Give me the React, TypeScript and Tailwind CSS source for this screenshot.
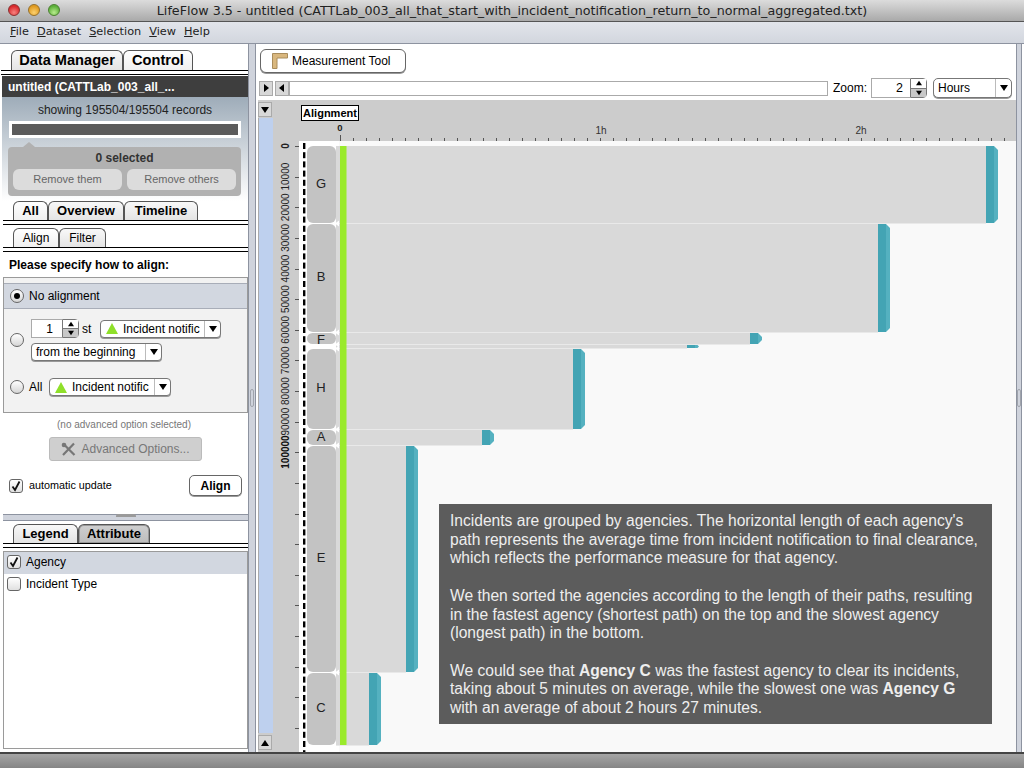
import React from "react";

const SANS = "font-['Liberation_Sans',Arial,sans-serif]";

function Tab({ label, active, pressed, className }: { label: string; active?: boolean; pressed?: boolean; className: string }) {
  return (
    <div
      className={`flex items-center justify-center rounded-t-[6px] border border-b-0 border-[#555] ${
        pressed ? "bg-[linear-gradient(#cfcfcf,#bdbdbd)] shadow-[inset_0_0_0_1px_#999]" : active ? "bg-[linear-gradient(#ffffff,#f0f0f0)]" : "bg-[linear-gradient(#f8f8f8,#e4e4e4)]"
      } font-bold text-black ${className}`}
    >
      {label}
    </div>
  );
}

function DoubleLine({ gap }: { gap: string }) {
  return <div className={`border-t border-b border-black bg-white ${gap}`} />;
}

function Radio({ on }: { on?: boolean }) {
  return (
    <div className="flex h-[14px] w-[14px] shrink-0 items-center justify-center rounded-full border border-[#666] bg-[linear-gradient(#ffffff,#d5d5d5)]">
      {on && <div className="h-[6px] w-[6px] rounded-full bg-black" />}
    </div>
  );
}

function Check({ on }: { on?: boolean }) {
  return (
    <div className="flex h-[14px] w-[14px] shrink-0 items-center justify-center rounded-[3px] border border-[#666] bg-[linear-gradient(#ffffff,#e0e0e0)]">
      {on && (
        <svg width="12" height="12" viewBox="0 0 12 12">
          <path d="M2.5 6.5 L5 10 L9.5 1.5" fill="none" stroke="#111" strokeWidth="1.8" />
        </svg>
      )}
    </div>
  );
}

function Triangle() {
  return (
    <svg width="12" height="11" viewBox="0 0 12 11" className="shrink-0">
      <polygon points="6,0 12,11 0,11" fill="#8fe02a" />
    </svg>
  );
}

function Arrow({ dir = "down", size = 8 }: { dir?: "down" | "up" | "left" | "right"; size?: number }) {
  const p = { down: "0,1 8,1 4,7", up: "0,7 8,7 4,1", left: "6,0 6,8 1,4", right: "2,0 2,8 7,4" }[dir];
  return (
    <svg width={size} height={size} viewBox="0 0 8 8" className="shrink-0">
      <polygon points={p} fill="#000" />
    </svg>
  );
}

function EventSelect({ className }: { className: string }) {
  return (
    <div className={`flex h-[18px] items-center rounded-[4px] border border-[#777] bg-white shadow-[0_1px_0_#999] ${className}`}>
      <div className="flex min-w-0 flex-1 items-center gap-[5px] whitespace-nowrap pl-[5px]">
        <Triangle />
        <span className="text-[12px]">Incident notific</span>
      </div>
      <div className="flex h-full w-[16px] items-center justify-center border-l border-[#bbb]">
        <Arrow />
      </div>
    </div>
  );
}

function SpinButtons({ width }: { width: string }) {
  return (
    <div className={`flex ${width} flex-col self-stretch rounded-r-[4px] border border-[#777]`}>
      <div className="flex flex-1 items-center justify-center bg-white">
        <Arrow dir="up" size={6} />
      </div>
      <div className="flex flex-1 items-center justify-center border-t border-[#777] bg-[#c8c8c8]">
        <Arrow size={6} />
      </div>
    </div>
  );
}

function LeftPanel() {
  return (
    <div className="flex w-[248px] shrink-0 flex-col bg-white">
      <div className="mt-[6px] flex h-[20px] pl-[11px] text-[14.6px]">
        <Tab label="Data Manager" className="w-[112px]" />
        <Tab label="Control" active className="w-[70px]" />
      </div>
      <DoubleLine gap="ml-[1px] h-[5px]" />
      <div className="ml-[2px] mt-[1px] flex h-[21px] items-center bg-[#3e3e3e] pl-[6px] text-[12px] font-bold text-white">
        untitled (CATTLab_003_all_...
      </div>
      <div className="ml-[2px] h-[104px] bg-[linear-gradient(#9eacb9,#ffffff)] px-[6px]">
        <div className="pt-[6px] text-center text-[12px] leading-[14px] text-[#222]">showing 195504/195504 records</div>
        <div className="ml-[1px] mt-[4px] h-[17px] w-[232px] border-[3px] border-white bg-[#5b5b5b]" />
        <div className="relative mt-[9px] h-[49px] w-[233px] rounded-[4px] bg-[#b1b1b1]">
          <div className="absolute -top-[5px] left-[15px] h-0 w-0 border-x-[6px] border-b-[5px] border-x-transparent border-b-[#b1b1b1]" />
          <div className="pt-[4px] text-center text-[12px] font-bold leading-[14px] text-[#333]">0 selected</div>
          <div className="mt-[4px] flex justify-between px-[5px] text-[11px] text-[#666]">
            <div className="flex h-[21px] w-[109px] items-center justify-center rounded-[6px] bg-[#dcdcdc]">Remove them</div>
            <div className="flex h-[21px] w-[109px] items-center justify-center rounded-[6px] bg-[#dcdcdc]">Remove others</div>
          </div>
        </div>
      </div>
      <div className="flex h-[19px] pl-[13px] text-[13px]">
        <Tab label="All" active className="w-[35px]" />
        <Tab label="Overview" className="w-[76px]" />
        <Tab label="Timeline" className="w-[74px]" />
      </div>
      <DoubleLine gap="ml-[3px] h-[5px]" />
      <div className="mt-[3px] flex h-[19px] pl-[13px] text-[12px]">
        <Tab label="Align" active className="w-[46px] !font-normal" />
        <Tab label="Filter" className="w-[47px] !font-normal" />
      </div>
      <DoubleLine gap="ml-[3px] h-[5px]" />
      <div className="mt-[6px] pl-[9px] text-[12px] font-bold leading-[14px]">Please specify how to align:</div>
      <div className="ml-[3px] mt-[5px] h-[136px] w-[245px] border border-[#9a9a9a] bg-[#f2f2f2] pt-[5px]">
        <div className="flex h-[26px] items-center gap-[5px] border-y border-[#a8adb8] bg-[#d2d7e0] pl-[6px] text-[12px]">
          <Radio on />
          No alignment
        </div>
        <div className="mt-[10px] flex items-center pl-[6px]">
          <Radio />
          <div className="ml-[7px] flex flex-col gap-[5px]">
            <div className="flex items-center text-[12px]">
              <div className="flex h-[19px] w-[48px]">
                <div className="flex w-[31px] items-center justify-end border border-r-0 border-[#aaa] bg-white pr-[9px]">1</div>
                <SpinButtons width="w-[17px]" />
              </div>
              <span className="ml-[3px] w-[18px]">st</span>
              <EventSelect className="w-[121px]" />
            </div>
            <div className="flex h-[18px] w-[131px] items-center rounded-[4px] border border-[#777] bg-white pl-[4px] text-[12px] shadow-[0_1px_0_#999]">
              <span className="flex-1">from the beginning</span>
              <div className="flex h-full w-[16px] items-center justify-center border-l border-[#bbb]">
                <Arrow />
              </div>
            </div>
          </div>
        </div>
        <div className="mt-[17px] flex items-center pl-[6px] text-[12px]">
          <Radio />
          <span className="ml-[5px] w-[20px]">All</span>
          <EventSelect className="w-[122px]" />
        </div>
      </div>
      <div className="mt-[5px] text-center text-[10px] leading-[14px] text-[#777]">(no advanced option selected)</div>
      <div className="ml-[49px] mt-[5px] flex h-[24px] w-[153px] items-center justify-center gap-[5px] rounded-[3px] border border-[#bbb] bg-[#cfcfcf] text-[12px] text-[#777]">
        <svg width="15" height="15" viewBox="0 0 15 15">
          <path d="M2 1.5 L13.5 13 M13 1.5 L2 13" stroke="#777" strokeWidth="2.2" fill="none" />
          <circle cx="3" cy="3" r="2.3" fill="#777" />
        </svg>
        Advanced Options...
      </div>
      <div className="mt-[14px] flex h-[21px] items-center pl-[9px] pr-[6px]">
        <Check on />
        <span className="ml-[6px] flex-1 text-[10.8px]">automatic update</span>
        <div className="flex h-[21px] w-[53px] items-center justify-center rounded-[5px] border border-[#666] bg-white text-[12px] font-bold shadow-[0_1px_0_#999]">Align</div>
      </div>
      <div className="relative ml-[3px] mt-[18px] h-[7px] border-y border-[#8d93a0] bg-[#cfd3dc]">
        <div className="absolute -top-px left-[113px] h-[3px] w-[20px] rounded-t-[2px] bg-[#9a9a9a]" />
      </div>
      <div className="mt-[3px] flex h-[19px] pl-[13px] text-[13px]">
        <Tab label="Legend" className="w-[65px]" />
        <Tab label="Attribute" pressed className="w-[72px]" />
      </div>
      <DoubleLine gap="ml-[3px] h-[5px]" />
      <div className="ml-[3px] mt-[3px] h-[198px] w-[245px] border border-[#9a9a9a] bg-white text-[12px] leading-[14px]">
        <div className="flex h-[22px] items-start gap-[5px] bg-[#d2d7e0] pl-[3px] pt-[3px]">
          <Check on />
          Agency
        </div>
        <div className="flex h-[22px] items-start gap-[5px] pl-[3px] pt-[3px]">
          <Check />
          Incident Type
        </div>
      </div>
    </div>
  );
}

const GROUPS = [
  { label: "G", y0: 146, y1: 223, end: 998 },
  { label: "B", y0: 224, y1: 332, end: 890 },
  { label: "F", y0: 333, y1: 344, end: 762 },
  { label: "", y0: 345, y1: 348, end: 699 },
  { label: "H", y0: 349, y1: 429, end: 585 },
  { label: "A", y0: 430, y1: 445, end: 494 },
  { label: "E", y0: 446, y1: 672, end: 418 },
  { label: "C", y0: 673, y1: 745, end: 381 },
];

function Chart() {
  const minor: number[] = [];
  for (let x = 353; x <= 1004; x += 13.02) minor.push(x);
  const yTicks: number[] = [];
  for (let i = 0; i < 20; i++) yTicks.push(146 + i * 30.63);
  const dashes: number[] = [];
  for (let y = 143; y < 752; y += 9.2) dashes.push(y);
  return (
    <svg viewBox="273 100 743 652" className="h-[652px] w-[743px]" style={{ fontFamily: "'Liberation Sans', Arial, sans-serif" }}>
      <rect x="273" y="100" width="743" height="652" fill="#cccccc" />
      <rect x="299" y="141" width="717" height="611" fill="#f9f9f9" />
      <rect x="299" y="141" width="40" height="611" fill="#ffffff" />
      <rect x="301.5" y="105.5" width="57" height="15" fill="#fff" stroke="#000" />
      <text x="330" y="117" textAnchor="middle" fontSize="11" fontWeight="bold">Alignment</text>
      <text x="340" y="131" textAnchor="middle" fontSize="9.5" fontWeight="bold" fill="#222">0</text>
      <text x="601" y="134" textAnchor="middle" fontSize="10" fill="#333">1h</text>
      <text x="861" y="134" textAnchor="middle" fontSize="10" fill="#333">2h</text>
      <line x1="340.5" y1="135" x2="340.5" y2="141" stroke="#555" />
      {minor.map((x) => (
        <line key={x} x1={Math.round(x) + 0.5} y1="138" x2={Math.round(x) + 0.5} y2="141" stroke="#555" />
      ))}
      {yTicks.map((y) => (
        <line key={y} x1="295" y1={Math.round(y) + 0.5} x2="299" y2={Math.round(y) + 0.5} stroke="#555" />
      ))}
      {["0", "10000", "20000", "30000", "40000", "50000", "60000", "70000", "80000", "90000"].map((t, i) => {
        const y = 146 + i * 30.63;
        return (
          <text key={t} transform={`translate(289 ${y}) rotate(-90)`} textAnchor="middle" fontSize="10" fontWeight={t === "0" ? "bold" : "normal"} fill="#222">
            {t}
          </text>
        );
      })}
      <text transform="translate(289 452) rotate(-90)" textAnchor="middle" fontSize="10" fontWeight="bold" fill="#111">100000</text>
      {dashes.map((y) => (
        <rect key={y} x="303" y={y} width="2.4" height="6" fill="#000" />
      ))}
      {GROUPS.map((g) => {
        const h = g.y1 - g.y0;
        const c = Math.min(h / 2, 4);
        const x = g.end - 12;
        return (
          <g key={g.y0}>
            <rect x="336" y={g.y0} width={x - 336} height={h + 1} fill="#d9d9d9" />
            <line x1="336" y1={g.y1 + 0.5} x2={x} y2={g.y1 + 0.5} stroke="#e9e9e9" />
            <rect x={x} y={g.y0} width="8" height={h} fill="#43a4b4" />
            <polygon points={`${x + 8},${g.y0} ${x + 8 + 4 - c},${g.y0} ${x + 12},${g.y0 + c} ${x + 12},${g.y1 - c} ${x + 8 + 4 - c},${g.y1} ${x + 8},${g.y1}`} fill="#55b1c0" />
            {h > 4 && <rect x="307" y={g.y0} width="29" height={h} rx={Math.min(6, h / 2)} fill="#c3c3c3" />}
            {g.y0 > 146 && <polygon points={`339,${g.y0 - 3.5} 339,${g.y0 + 2.5} 335,${g.y0 - 0.5}`} fill="#ffffff" />}
            {g.label && (
              <text x="321" y={(g.y0 + g.y1) / 2 + (g.label === "F" ? 5 : 3)} textAnchor="middle" fontSize="13" fill="#222">
                {g.label}
              </text>
            )}
          </g>
        );
      })}
      <rect x="340" y="146" width="6.5" height="599" fill="#9aea2b" />
    </svg>
  );
}

function SmallBtn({ dir }: { dir: "left" | "right" | "up" | "down" }) {
  return (
    <div className="flex h-[15px] w-[14px] items-center justify-center border border-[#aaa] bg-[#d8d8d8]">
      <Arrow dir={dir} />
    </div>
  );
}

function RightPanel() {
  return (
    <div className="flex w-[760px] shrink-0 flex-col bg-white pl-[2px]">
      <div className="ml-[2px] mt-[5px] flex h-[24px] w-[146px] items-center rounded-[6px] border border-[#666] bg-white pl-[11px] text-[12px] shadow-[0_1px_0_#999]">
        <svg width="16" height="16" viewBox="0 0 16 16" className="shrink-0">
          <path d="M0.5 0.5 H15.5 V5 H5 V15.5 H0.5 Z" fill="#d9b77e" stroke="#a98c5c" />
        </svg>
        <span className="ml-[4px]">Measurement Tool</span>
      </div>
      <div className="mt-[5px] flex h-[20px] items-center text-[12px]">
        <div className="flex flex-1 items-center gap-[2px] pl-[1px]">
          <SmallBtn dir="right" />
          <SmallBtn dir="left" />
          <div className="-ml-[2px] h-[15px] flex-1 border border-[#aaa] bg-white" />
        </div>
        <span className="ml-[5px] w-[38px]">Zoom:</span>
        <div className="flex h-[20px] w-[56px]">
          <div className="flex w-[39px] items-center justify-end border border-r-0 border-[#aaa] bg-white pr-[7px] text-[12.5px]">2</div>
          <SpinButtons width="w-[17px]" />
        </div>
        <div className="ml-[6px] mr-[4px] flex h-[20px] w-[79px] items-center rounded-[5px] border border-[#777] bg-white pl-[4px] shadow-[0_1px_0_#999]">
          <span className="flex-1">Hours</span>
          <div className="flex h-full w-[16px] items-center justify-center border-l border-[#bbb]">
            <Arrow />
          </div>
        </div>
      </div>
      <div className="mt-[2px] flex h-[652px]">
        <div className="flex w-[15px] flex-col bg-[#cccccc]">
          <div className="h-[2px]" />
          <SmallBtn dir="down" />
          <div className="mt-[1px] h-[615px] border-l border-[#aaa] bg-[#bed0ee]" />
          <div className="mt-[2px]">
            <SmallBtn dir="up" />
          </div>
        </div>
        <Chart />
      </div>
    </div>
  );
}

function Splitter({ width }: { width: string }) {
  return (
    <div className={`flex ${width} shrink-0 items-center justify-center border-x border-[#8d93a0] bg-[#cfd3dc]`}>
      <div className="h-[18px] w-[4px] rounded-[2px] border border-[#a0a4ac]" />
    </div>
  );
}

export default function App() {
  return (
    <div className={`relative flex h-[768px] w-[1024px] flex-col overflow-hidden bg-white text-black ${SANS}`}>
      <div className="relative flex h-[22px] shrink-0 items-center justify-center border-b border-[#555] bg-[linear-gradient(#dcdcdc,#a9a9a9)] font-['DejaVu_Sans',sans-serif] text-[12.7px] text-[#222]">
        <div className="absolute left-[8px] top-[4px] flex gap-[8px]">
          <div className="h-[12px] w-[12px] rounded-full border border-[#8a3030] bg-[radial-gradient(circle_at_50%_75%,#f7837f,#d9282b_70%)]" />
          <div className="h-[12px] w-[12px] rounded-full border border-[#96702a] bg-[radial-gradient(circle_at_50%_75%,#fbd170,#e09a20_70%)]" />
          <div className="h-[12px] w-[12px] rounded-full border border-[#4a7f30] bg-[radial-gradient(circle_at_50%_75%,#b8ec8e,#5cb039_70%)]" />
        </div>
        <span className="whitespace-nowrap">LifeFlow 3.5 - untitled (CATTLab_003_all_that_start_with_incident_notification_return_to_normal_aggregated.txt)</span>
      </div>
      <div className="flex h-[22px] shrink-0 items-center gap-[8px] border-b border-[#8d93a0] bg-[linear-gradient(#e2e5eb,#d2d6de)] pl-[10px] font-['DejaVu_Sans',sans-serif] text-[11.3px] text-[#222]">
        <span><u>F</u>ile</span>
        <span><u>D</u>ataset</span>
        <span><u>S</u>election</span>
        <span><u>V</u>iew</span>
        <span><u>H</u>elp</span>
      </div>
      <div className="flex h-[708px] shrink-0">
        <LeftPanel />
        <Splitter width="w-[8px]" />
        <RightPanel />
        <Splitter width="w-[6px]" />
      </div>
      <div className="h-[16px] shrink-0 border-t-2 border-[#444] bg-[linear-gradient(#a5a5a5,#858585)]" />
      <div className="absolute left-[439px] top-[504px] h-[220px] w-[553px] bg-[#5c5c5c] pl-[11px] pr-[10px] pt-[8px] text-[15.6px] leading-[18.7px] text-[#eeeeee]">
        <p>Incidents are grouped by agencies. The horizontal length of each agency's path represents the average time from incident notification to final clearance, which reflects the performance measure for that agency.</p>
        <p className="mt-[18.7px]">We then sorted the agencies according to the length of their paths, resulting in the fastest agency (shortest path) on the top and the slowest agency (longest path) in the bottom.</p>
        <p className="mt-[18.7px]">We could see that <b>Agency C</b> was the fastest agency to clear its incidents, taking about 5 minutes on average, while the slowest one was <b>Agency G</b> with an average of about 2 hours 27 minutes.</p>
      </div>
    </div>
  );
}
